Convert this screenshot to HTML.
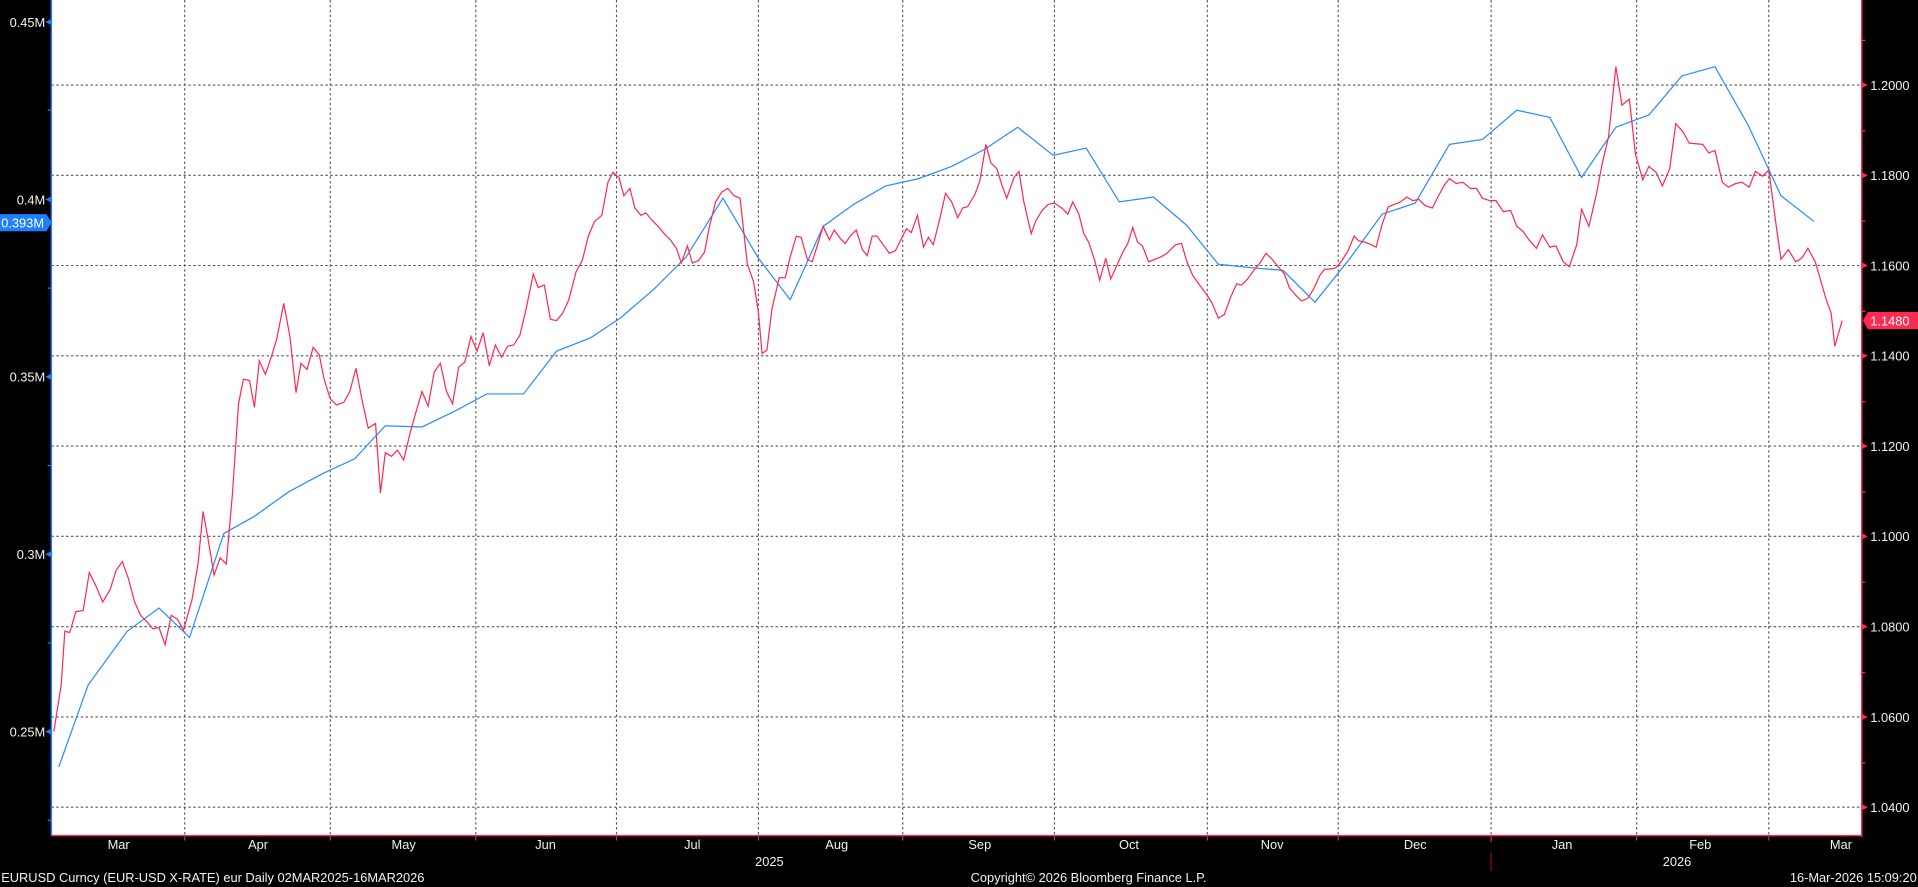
<!DOCTYPE html>
<html><head><meta charset="utf-8"><style>
html,body{margin:0;padding:0;background:#000;width:1918px;height:887px;overflow:hidden}
svg{display:block}
text{font-family:"Liberation Sans",sans-serif;fill:#f2f2ea;font-size:10.5px}
</style></head><body>
<svg width="1918" height="887" viewBox="0 0 1568 725" preserveAspectRatio="none" xmlns="http://www.w3.org/2000/svg">
<rect x="0" y="0" width="1568" height="725" fill="#000"/>
<rect x="42" y="0" width="1480" height="683" fill="#fff"/>
<g stroke="#555" stroke-width="0.9" stroke-dasharray="2,2">
<line x1="42" x2="1522" y1="69.5" y2="69.5"/><line x1="42" x2="1522" y1="143.3" y2="143.3"/>
<line x1="42" x2="1522" y1="217" y2="217"/><line x1="42" x2="1522" y1="290.8" y2="290.8"/>
<line x1="42" x2="1522" y1="364.6" y2="364.6"/><line x1="42" x2="1522" y1="438.4" y2="438.4"/>
<line x1="42" x2="1522" y1="512.2" y2="512.2"/><line x1="42" x2="1522" y1="586" y2="586"/>
<line x1="42" x2="1522" y1="659.8" y2="659.8"/>
<line x1="151" x2="151" y1="0" y2="683"/><line x1="270" x2="270" y1="0" y2="683"/>
<line x1="389" x2="389" y1="0" y2="683"/><line x1="504" x2="504" y1="0" y2="683"/>
<line x1="620" x2="620" y1="0" y2="683"/><line x1="738" x2="738" y1="0" y2="683"/>
<line x1="862" x2="862" y1="0" y2="683"/><line x1="987" x2="987" y1="0" y2="683"/>
<line x1="1094" x2="1094" y1="0" y2="683"/><line x1="1219" x2="1219" y1="0" y2="683"/>
<line x1="1338" x2="1338" y1="0" y2="683"/><line x1="1446" x2="1446" y1="0" y2="683"/>
</g>
<!-- axes -->
<line x1="42" x2="42" y1="0" y2="683" stroke="#1e7fff" stroke-width="1.2"/>
<line x1="1522" x2="1522" y1="0" y2="684" stroke="#ff2a4f" stroke-width="1.2"/>
<line x1="42" x2="1522" y1="683" y2="683" stroke="#ff2a4f" stroke-width="1.2"/>
<g stroke="#666" stroke-width="1">
<line x1="151" x2="151" y1="684" y2="687"/><line x1="270" x2="270" y1="684" y2="687"/><line x1="389" x2="389" y1="684" y2="687"/><line x1="504" x2="504" y1="684" y2="687"/><line x1="620" x2="620" y1="684" y2="687"/><line x1="738" x2="738" y1="684" y2="687"/><line x1="862" x2="862" y1="684" y2="687"/><line x1="987" x2="987" y1="684" y2="687"/><line x1="1094" x2="1094" y1="684" y2="687"/><line x1="1338" x2="1338" y1="684" y2="687"/><line x1="1446" x2="1446" y1="684" y2="687"/>
</g>
<line x1="1219" x2="1219" y1="684" y2="688" stroke="#ff2a4f"/>
<line x1="1219" x2="1219" y1="697" y2="712" stroke="#8a1020"/>
<!-- left ticks -->
<g fill="#1e7fff">
<polygon points="37,18 42,15.5 42,20.5"/><polygon points="37,163 42,160.5 42,165.5"/><polygon points="37,308 42,305.5 42,310.5"/><polygon points="37,453 42,450.5 42,455.5"/><polygon points="37,598 42,595.5 42,600.5"/>
<rect x="39" y="89.5" width="3" height="1"/><rect x="39" y="235" width="3" height="1"/><rect x="39" y="380" width="3" height="1"/><rect x="39" y="525" width="3" height="1"/><rect x="39" y="670" width="3" height="1"/>
</g>
<g text-anchor="end">
<text x="37" y="22">0.45M</text><text x="37" y="167">0.4M</text><text x="37" y="312">0.35M</text><text x="37" y="457">0.3M</text><text x="37" y="602">0.25M</text>
</g>
<polygon points="0,175 38,175 42,182 38,189 0,189" fill="#1e7fff"/>
<text x="1" y="186" fill="#fff" style="fill:#fff">0.393M</text>
<!-- right ticks -->
<g fill="#ff2a4f">
<polygon points="1522,67 1527,69.5 1522,72"/><polygon points="1522,140.8 1527,143.3 1522,145.8"/><polygon points="1522,214.5 1527,217 1522,219.5"/><polygon points="1522,288.3 1527,290.8 1522,293.3"/><polygon points="1522,362.1 1527,364.6 1522,367.1"/><polygon points="1522,435.9 1527,438.4 1522,440.9"/><polygon points="1522,509.7 1527,512.2 1522,514.7"/><polygon points="1522,583.5 1527,586 1522,588.5"/><polygon points="1522,657.3 1527,659.8 1522,662.3"/>
<rect x="1522" y="32.5" width="3" height="1"/><rect x="1522" y="106.4" width="3" height="1"/><rect x="1522" y="180.2" width="3" height="1"/><rect x="1522" y="254" width="3" height="1"/><rect x="1522" y="327.8" width="3" height="1"/><rect x="1522" y="401.6" width="3" height="1"/><rect x="1522" y="475.4" width="3" height="1"/><rect x="1522" y="549.2" width="3" height="1"/><rect x="1522" y="623" width="3" height="1"/>
</g>
<g>
<text x="1529" y="73.5">1.2000</text><text x="1529" y="147.3">1.1800</text><text x="1529" y="221">1.1600</text><text x="1529" y="294.8">1.1400</text><text x="1529" y="368.6">1.1200</text><text x="1529" y="442.4">1.1000</text><text x="1529" y="516.2">1.0800</text><text x="1529" y="590">1.0600</text><text x="1529" y="663.8">1.0400</text>
</g>
<polygon points="1523,262 1527,255 1568,255 1568,269 1527,269" fill="#ff2a4f"/>
<text x="1529" y="266" style="fill:#fff">1.1480</text>
<!-- month labels -->
<g text-anchor="middle">
<text x="97" y="694">Mar</text><text x="211" y="694">Apr</text><text x="330" y="694">May</text><text x="446" y="694">Jun</text><text x="566" y="694">Jul</text><text x="684" y="694">Aug</text><text x="801" y="694">Sep</text><text x="923" y="694">Oct</text><text x="1040" y="694">Nov</text><text x="1157" y="694">Dec</text><text x="1277" y="694">Jan</text><text x="1390" y="694">Feb</text><text x="1505" y="694">Mar</text>
<text x="629" y="708">2025</text><text x="1371" y="708">2026</text>
<text x="890" y="721">Copyright© 2026 Bloomberg Finance L.P.</text>
</g>
<text x="1" y="721">EURUSD Curncy (EUR-USD X-RATE) eur Daily 02MAR2025-16MAR2026</text>
<text x="1567" y="721" text-anchor="end">16-Mar-2026 15:09:20</text>
<!-- blue series -->
<polyline fill="none" stroke="#2a8cff" stroke-width="1" points="48,627 72,560 104,516 130,497 155,521 183,436 208,422 236,402 264,387 290,375 315,348 345,349 372,336 398,322 428,322 455,287 483,276 507,260 535,236 561,210 591,162 620,211 646,245 673,185 698,167 724,152 751,146 778,136 805,122 832,104 861,127 888,121 915,165 943,161 970,184 996,216 1025,219 1049,221 1075,247 1103,212 1130,175 1157,166 1185,118 1212,114 1240,90 1267,96 1293,145 1321,104 1348,94 1375,62 1402,54.5 1429,102 1456,160 1483,181"/>
<!-- red series -->
<polyline fill="none" stroke="#ff2a4f" stroke-width="1" points="44,598 50,560 53,516 57,517 62,500 68,499 73,468 78,478 84,492 90,482 95,466 100,459 105,473 110,492 115,503 120,508 125,514 130,513 135,527 140,503 145,506 150,515 157,490 162,460 166,418 170,440 175,470 180,456 185,461 190,404 195,330 199,310 204,311 208,333 212,295 217,306 222,291 226,278 232,248 237,275 242,321 246,297 251,302 256,284 261,290 265,310 270,326 275,331 281,329 286,320 291,301 296,327 301,350 307,346 311,403 315,370 320,373 325,368 330,376 335,355 340,337 345,320 350,332 355,304 360,297 365,320 370,330 375,300 380,296 385,275 390,287 395,272 400,299 405,282 410,292 415,283 420,282 425,274 430,253 436,224 440,235 445,233 450,261 455,262 460,256 465,245 471,222 476,213 481,193 486,181 492,176 497,149 501,141 506,145 510,160 515,154 519,170 524,176 528,174 533,180 538,185 543,191 548,196 553,203 557,215 562,201 566,215 571,213 576,206 580,185 585,165 590,157 595,154 600,160 605,162 611,216 616,230 620,255 623,289 627,286 631,253 637,227 642,227 646,210 651,193 655,194 660,212 664,214 669,198 673,185 678,196 682,188 687,195 691,199 695,193 700,188 705,204 709,209 713,193 717,193 722,200 727,207 732,205 737,195 741,187 745,190 750,176 755,202 759,194 763,200 768,180 773,158 778,165 783,178 787,170 791,169 797,159 801,148 806,118 810,133 815,138 819,151 823,162 829,145 833,140 837,165 843,191 847,180 852,172 857,167 862,166 868,170 873,175 877,165 882,175 886,191 890,198 895,213 899,229 904,211 908,228 913,217 918,206 922,199 926,186 930,198 934,201 939,214 944,212 949,210 954,207 961,200 966,199 970,213 975,225 980,232 986,240 991,248 996,260 1001,257 1006,243 1011,232 1015,233 1020,228 1025,221 1030,215 1035,207 1040,212 1045,218 1050,224 1054,235 1059,241 1064,246 1069,244 1074,236 1079,225 1083,220 1087,220 1092,219 1097,213 1102,205 1107,193 1111,197 1116,198 1121,200 1125,202 1130,183 1135,169 1140,167 1145,165 1150,161 1155,164 1160,163 1165,168 1171,170 1176,160 1181,151 1185,146 1190.5,150 1196,149 1202,154 1207,154 1212,162 1218,164 1223,164 1229,173 1235,172 1240,185 1245,189 1250,196 1256,203 1261,192 1267,202 1272,201 1278,214 1283,218 1289,200 1293,171 1299,185 1305,159 1310,133 1315,112 1321,54.5 1326,86 1332,81 1337,126 1343,147 1348,136 1354,141 1359,152 1365,138 1370,101 1376,108 1381,117 1392,118 1397,125 1402,123 1408,149 1413,153 1419,150 1424,149 1430,153 1435,140 1441,144 1446,139 1452,184 1456,212 1462,204 1468,214 1473,211 1478,203 1484,214 1493,245 1497,256 1500,283 1506,262"/>
</svg>
</body></html>
